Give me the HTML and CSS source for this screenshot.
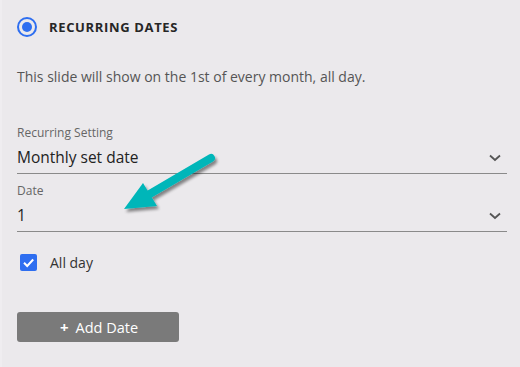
FILE: index.html
```html
<!DOCTYPE html>
<html>
<head>
<meta charset="utf-8">
<link rel="stylesheet" href="styles.css">
</head>
<body>
<div class="panel">
  <div class="header">
    <span class="radio"><span class="radio-dot"></span></span>
    <span class="title">RECURRING DATES</span>
  </div>
  <p class="desc">This slide will show on the 1st of every month, all day.</p>
  <div class="field first">
    <div class="label">Recurring Setting</div>
    <div class="select">
      <span class="value">Monthly set date</span>
      <svg class="chev" width="12" height="8" viewBox="0 0 12 8"><path d="M1 1.5 L6 6 L11 1.5" fill="none" stroke="#555" stroke-width="1.8"/></svg>
    </div>
  </div>
  <div class="field">
    <div class="label">Date</div>
    <div class="select">
      <span class="value">1</span>
      <svg class="chev" width="12" height="8" viewBox="0 0 12 8"><path d="M1 1.5 L6 6 L11 1.5" fill="none" stroke="#555" stroke-width="1.8"/></svg>
    </div>
  </div>
  <label class="check-row">
    <span class="checkbox"><svg width="17" height="17" viewBox="0 0 17 17"><path d="M4 8.8 L7.2 12 L13.2 5.5" fill="none" stroke="#fff" stroke-width="2"/></svg></span>
    <span class="check-label">All day</span>
  </label>
  <button class="add-btn"><span class="plus">+</span><span class="btn-text">Add Date</span></button>

  <svg class="arrow" width="520" height="367" viewBox="0 0 520 367">
    <defs>
      <filter id="sh" x="-20%" y="-20%" width="140%" height="140%">
        <feGaussianBlur in="SourceAlpha" stdDeviation="1.8"/>
        <feOffset dx="2" dy="3" result="b"/>
        <feComponentTransfer><feFuncA type="linear" slope="0.45"/></feComponentTransfer>
        <feMerge><feMergeNode/><feMergeNode in="SourceGraphic"/></feMerge>
      </filter>
    </defs>
    <g filter="url(#sh)">
      <line x1="211" y1="158" x2="148" y2="195" stroke="#00b6b9" stroke-width="8" stroke-linecap="round"/>
      <polygon points="143,183 124,209 157,206" fill="#00b6b9"/>
    </g>
  </svg>
</div>
</body>
</html>
```

FILE: styles.css
```css
html, body {
  margin: 0;
  padding: 0;
  background: #ebe9ec;
}
body {
  font-family: "Open Sans", "Liberation Sans", sans-serif;
  width: 520px;
  height: 367px;
  overflow: hidden;
}
.panel {
  position: relative;
  height: 367px;
  box-sizing: border-box;
  padding: 17px 13px 0 15px;
  border-left: 2px solid #efedf0;
}
.header {
  display: flex;
  align-items: center;
  height: 20px;
}
.radio {
  width: 20px;
  height: 20px;
  box-sizing: border-box;
  border: 2.5px solid #2e6ef0;
  border-radius: 50%;
  display: flex;
  align-items: center;
  justify-content: center;
}
.radio-dot {
  width: 10px;
  height: 10px;
  border-radius: 50%;
  background: #2e6ef0;
}
.title {
  margin-left: 12px;
  font-weight: 700;
  font-size: 13px;
  letter-spacing: 0.65px;
  color: #262626;
}
.desc {
  margin: 31px 0 0;
  font-size: 14px;
  line-height: 18px;
  color: #555;
}
.field.first {
  margin-top: 39px;
}
.field {
  margin-top: 9px;
}
.label {
  font-size: 12px;
  line-height: 16px;
  color: #666;
}
.select {
  display: flex;
  align-items: center;
  justify-content: space-between;
  box-sizing: border-box;
  border-bottom: 1px solid #8a8a8a;
  height: 33px;
  padding: 4px 6px 4px 0;
}
.value {
  font-size: 15.5px;
  line-height: 24px;
  color: #222;
}
.chev {
  display: block;
  margin-top: 2px;
}
.check-row {
  display: flex;
  align-items: center;
  margin-top: 22px;
  margin-left: 3px;
  height: 17px;
}
.checkbox {
  width: 17px;
  height: 17px;
  border-radius: 2px;
  background: #2e6ef0;
  display: block;
}
.checkbox svg { display: block; }
.check-label {
  margin-left: 13px;
  font-size: 14px;
  color: #333;
}
.add-btn {
  display: flex;
  align-items: center;
  justify-content: center;
  margin-top: 41px;
  width: 162px;
  height: 30px;
  border: none;
  border-radius: 3px;
  background: #7a7a7a;
  color: #fff;
  font-family: "Open Sans", "Liberation Sans", sans-serif;
  font-size: 14.5px;
  padding: 0 0 0 2px;
}
.plus {
  font-weight: 700;
  font-size: 15px;
  margin-right: 7px;
}
.arrow {
  position: absolute;
  left: -2px;
  top: 0;
  pointer-events: none;
}
```
